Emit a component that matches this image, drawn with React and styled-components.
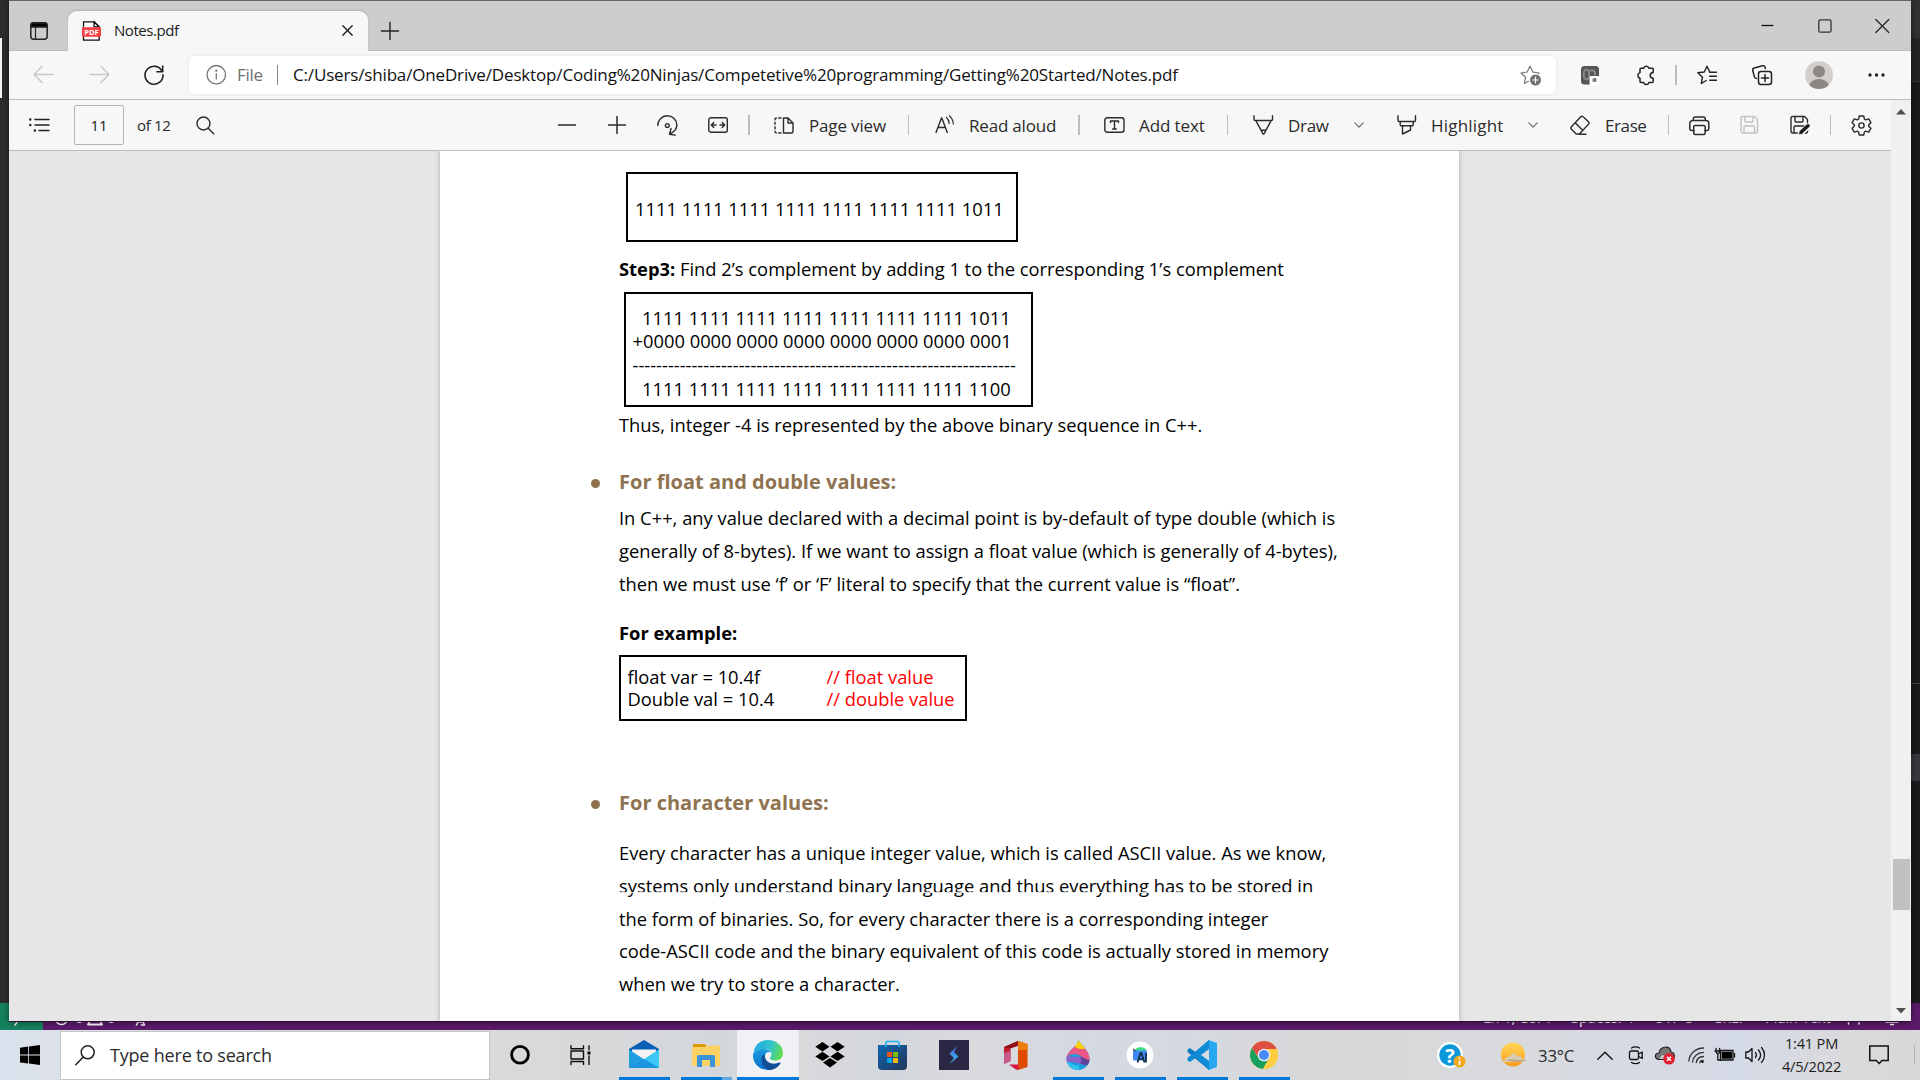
import React from "react";
import styled, { createGlobalStyle } from "styled-components";

const Global = createGlobalStyle`
  * { box-sizing: border-box; }
  html, body { margin: 0; padding: 0; overflow: hidden; }
  body { font-family: "Open Sans", "Noto Sans", sans-serif; color: #1b1b1b; }
  svg { display: block; flex: none; overflow: visible; }
`;

/* ---------- desktop ---------- */

const Desktop = styled.div`
  position: relative;
  width: 1920px;
  height: 1080px;
  display: flex;
  flex-direction: column;
  overflow: hidden;
  background: #1b1b1b;
`;
const EditorBody = styled.div`
  display: flex;
  justify-content: space-between;
  height: 1003px;
`;
const EditorEdge = styled.div`
  width: 9px;
  display: flex;
  flex-direction: column;
  background: ${(p) => p.$bg};
`;
const EdgePart = styled.div`
  height: ${(p) => p.$h}px;
  width: ${(p) => p.$w || 9}px;
  background: ${(p) => p.$bg || "transparent"};
`;
const StatusBar = styled.div`
  height: 27px;
  display: flex;
  background: #5c1a6b;
  color: #fff;
  font-size: 14.5px;
  line-height: 27px;
`;
const Remote = styled.div`
  width: 43px;
  background: #16825d;
  padding: 9px 0 0 14px;
`;
const StatusGroup = styled.div`
  display: flex;
  padding-left: ${(p) => p.$pl || 0}px;
`;
const StatusItem = styled.span`
  width: ${(p) => p.$w}px;
  white-space: nowrap;
  padding-top: 1px;
`;
const StatusFill = styled.div`
  flex: 1;
`;

const Window = styled.div`
  position: absolute;
  left: 9px;
  top: 0;
  width: 1902px;
  height: 1021px;
  display: flex;
  flex-direction: column;
  background: #f7f7f7;
  border-top: 1px solid #6a6464;
  box-shadow: 0 1px 7px rgba(0, 0, 0, 0.5), 0 1px 0 #3d1746;
`;

/* ---------- tab strip ---------- */

const TabStrip = styled.div`
  height: 50px;
  display: flex;
  align-items: flex-end;
  background: #cdcdcd;
  border-bottom: 1px solid #bdbdbd;
`;
const StripCell = styled.div`
  width: ${(p) => p.$w}px;
  height: 38px;
  padding: ${(p) => p.$p || "0"};
`;
const Tab = styled.div`
  width: 300px;
  height: 40px;
  margin-bottom: -1px;
  display: flex;
  align-items: center;
  padding: 0 0 1px 14px;
  border-radius: 9px 9px 0 0;
  background: #f7f7f7;
  box-shadow: 0 -1px 2px rgba(0, 0, 0, 0.14);
`;
const TabTitle = styled.span`
  width: 241px;
  padding: 0 0 2px 13px;
  font-size: 15px;
  letter-spacing: -0.45px;
`;
const WindowButtons = styled.div`
  margin-left: auto;
  display: flex;
  align-self: flex-start;
  padding-top: 18px;
`;
const WinButton = styled.div`
  width: ${(p) => p.$w || 57}px;
  display: flex;
`;

/* ---------- address row ---------- */

const AddressRow = styled.div`
  height: 49px;
  display: flex;
  align-items: center;
  padding-left: 24px;
  border-bottom: 1px solid #bcbcbc;
`;
const Cell = styled.div`
  width: ${(p) => p.$w}px;
  flex: none;
  display: flex;
  align-items: center;
`;
const UrlBox = styled.div`
  width: 1367px;
  height: 38px;
  display: flex;
  align-items: center;
  padding-left: 17px;
  background: #fff;
  border-radius: 5px;
  box-shadow: 0 0 4px rgba(0, 0, 0, 0.08);
  font-size: 17px;
`;
const Url = styled.span`
  width: 1227px;
  padding-bottom: 2px;
  color: #111;
  white-space: nowrap;
  letter-spacing: ${(p) => p.$ls}px;
`;
const Scheme = styled.span`
  width: 40px;
  padding-bottom: 2px;
  color: #707070;
  letter-spacing: -0.3px;
`;
const Rule = styled.div`
  width: ${(p) => p.$w || 1}px;
  height: 20px;
  background: ${(p) => p.$c || "#bdbdbd"};
`;
const Avatar = styled.div`
  width: 28px;
  height: 28px;
  border-radius: 50%;
  overflow: hidden;
  background: #d3d0cb;
`;

/* ---------- pdf viewer ---------- */

const Viewer = styled.div`
  flex: 1;
  display: flex;
  min-height: 0;
`;
const ViewerMain = styled.div`
  width: 1882px;
  display: flex;
  flex-direction: column;
`;
const PdfBar = styled.div`
  height: 51px;
  flex: none;
  display: flex;
  align-items: center;
  padding-left: 20px;
  border-bottom: 1px solid #bcbcbc;
`;
const PageInput = styled.div`
  width: 50px;
  height: 40px;
  display: flex;
  align-items: center;
  justify-content: center;
  border: 1px solid #b4b4b4;
  border-radius: 2px;
  font-size: 15px;
`;
const Label = styled.span`
  font-size: ${(p) => p.$size || 17}px;
  letter-spacing: ${(p) => p.$ls || 0}px;
  white-space: nowrap;
  color: #2b2b2b;
`;
const Scrollbar = styled.div`
  width: 20px;
  display: flex;
  flex-direction: column;
  align-items: center;
  justify-content: space-between;
  padding: 9px 0 7px;
  background: #f0f0f0;
`;
const Track = styled.div`
  flex: 1;
  width: 100%;
  padding: 744px 1px 0 2px;
`;
const Thumb = styled.div`
  height: 51px;
  background: #c1c1c1;
`;
const Canvas = styled.div`
  flex: 1;
  min-height: 0;
  overflow: hidden;
  display: flex;
  background: #e6e6e6;
  padding-left: 431px;
`;
const Page = styled.article`
  position: relative;
  width: 1019px;
  padding: 21px 0 0 179px;
  background: #fff;
  box-shadow: 0 0 5px rgba(0, 0, 0, 0.28);
  color: #000;
  font-size: 18.33px;
`;
const Seam = styled.div`
  position: absolute;
  left: 170px;
  right: 100px;
  top: 741px;
  height: 1px;
  background: rgba(255, 255, 255, 0.85);
`;
const Frame = styled.div`
  width: ${(p) => p.$w}px;
  height: ${(p) => p.$h}px;
  margin-left: ${(p) => p.$ml || 0}px;
  padding: ${(p) => p.$p};
  border: 2px solid #000;
  line-height: ${(p) => p.$lh}px;
  white-space: pre;
`;
const Para = styled.p`
  margin: ${(p) => p.$mt}px 0 0;
  line-height: ${(p) => p.$lh || 25}px;
  white-space: pre;
`;
const Gap = styled.div`
  height: ${(p) => p.$h}px;
`;
const Heading = styled.h3`
  display: flex;
  align-items: center;
  margin: ${(p) => p.$mt}px 0 0 -28.5px;
  font-size: 20.03px;
  font-weight: 700;
  line-height: 30px;
  color: #8f7350;
  &::before {
    content: "";
    width: 9px;
    height: 9px;
    margin: 3px 19.5px 0 0;
    border-radius: 50%;
    background: #8f7350;
  }
`;
const CodeRow = styled.div`
  display: flex;
`;
const Code = styled.span`
  width: 199px;
`;
const Comment = styled.span`
  color: #ff0000;
`;

/* ---------- taskbar ---------- */

const Taskbar = styled.div`
  height: 50px;
  flex: none;
  position: relative;
  display: flex;
  background: linear-gradient(90deg, #dbe2ed 0, #dce1e9 60px, #dadada 490px, #d7d8da 620px, #d3d7dc 720px, #d9dadb 780px, #d3d6dc 900px, #d9dadd 960px, #d4d9e2 1090px, #d6d9df 1200px, #d8d8d8 1340px, #d9dade 1500px, #d4dae6 1740px, #dadadd 1840px, #d8d8da 1920px);
`;
const Start = styled.div`
  width: 60px;
  padding: 15px 0 0 20px;
`;
const Search = styled.div`
  width: 430px;
  height: 49px;
  margin-top: 1px;
  display: flex;
  align-items: center;
  padding: 0 0 1px 14px;
  gap: 15px;
  background: #fff;
  border: 1px solid #c6c6c6;
  font-size: 18px;
  letter-spacing: -0.2px;
  color: #2b2b2b;
`;
const AppButton = styled.div`
  width: 62px;
  height: 50px;
  display: flex;
  flex-direction: column;
  align-items: center;
  justify-content: space-between;
  background: ${(p) => (p.$active ? "#eff1f4" : "transparent")};
`;
const AppIcon = styled.div`
  height: 47px;
  display: flex;
  align-items: center;
  padding-top: 3px;
`;
const Underline = styled.div`
  height: 3px;
  width: ${(p) => (p.$full ? 62 : 51)}px;
  background: ${(p) => (p.$split ? "linear-gradient(90deg, #0078d7 41px, #62a8e2 41px)" : "#0078d7")};
`;
const SystemCell = styled.div`
  width: 60px;
  display: flex;
  align-items: center;
  justify-content: center;
`;
const Tray = styled.div`
  display: flex;
  align-items: center;
  padding-left: 142px;
`;
const Clock = styled.div`
  width: 81px;
  display: flex;
  flex-direction: column;
  align-items: center;
  font-size: 14.6px;
  line-height: 23px;
  letter-spacing: -0.2px;
  color: #1d1d1d;
  white-space: nowrap;
`;

const Svg = ({ w = 20, h = 20, sw = 1.4, c = "#2b2b2b", fill = "none", children }) => (
  <svg width={w} height={h} viewBox={`0 0 ${w} ${h}`} fill={fill} stroke={c} strokeWidth={sw} strokeLinecap="round" strokeLinejoin="round">
    {children}
  </svg>
);

const Chevron = () => (
  <Svg w={10} h={6} sw={1.1} c="#666"><path d="M.8 .8 5 5.2 9.2 .8" /></Svg>
);
const Floppy = ({ c, pen }) => (
  <Svg w={20} h={20} c={c}>
    <path d="M2.500 1.500h12l3 3v12a1.500 1.500 0 0 1-1.500 1.500H2.500A1.500 1.500 0 0 1 1 16.500V3a1.500 1.500 0 0 1 1.500-1.500zM5 1.500v4.500a1 1 0 0 0 1 1h6a1 1 0 0 0 1-1V1.500M4 18v-6a1 1 0 0 1 1-1h8.500a1 1 0 0 1 1 1v6" />
    {pen && <><path d="M10.500 18.500 19 10.500" stroke="#f7f7f7" strokeWidth="5.500" /><path d="M11.500 16.800 18 10.800" stroke="#1d1d1d" strokeWidth="3.600" /><path d="m8.700 19.600 1.400-4 2.900 2.900z" fill="#1d1d1d" stroke="none" /></>}
  </Svg>
);

const barcode = "1111 1111 1111 1111 1111 1111 1111 ";

function Tabs() {
  return (
    <TabStrip>
      <StripCell $w={59} $p="10px 0 0 21px">
        <Svg w={18} h={18} sw={1.5} c="#222">
          <rect x=".8" y=".8" width="16.400" height="16.400" rx="3" />
          <path d="M1 3a2 2 0 0 1 2-2h12a2 2 0 0 1 2 2v2H1z" fill="#000" />
          <path d="M5.500 5v12" strokeWidth="1.200" />
        </Svg>
      </StripCell>
      <Tab>
        <Svg w={19} h={20} sw={1.3} c="#111">
          <path d="M1.500 6V.8h10.500l5.200 5V19.200H1.500V6" fill="#fff" />
          <path d="M12 .8v5h5z" fill="#fff" />
          <rect x="0" y="6.200" width="19" height="9.600" rx="1" fill="#f43f43" stroke="none" />
          <text x="9.500" y="13.700" textAnchor="middle" fontSize="7.600" fontWeight="700" fill="#fff" stroke="none">PDF</text>
        </Svg>
        <TabTitle>Notes.pdf</TabTitle>
        <Svg w={11} h={11} sw={1.4} c="#222"><path d="m.8 .8 9.400 9.400M10.200 .8.8 10.200" /></Svg>
      </Tab>
      <StripCell $w={40} $p="9.500px 0 0 13px">
        <Svg w={18} h={18} c="#222"><path d="M9 .5v17M.5 9h17" /></Svg>
      </StripCell>
      <WindowButtons>
        <WinButton><Svg w={13} h={13} sw={1.3} c="#111"><path d="M.5 6.500h12" strokeLinecap="butt" /></Svg></WinButton>
        <WinButton><Svg w={14} h={14} sw={1.3} c="#333"><rect x=".8" y=".8" width="12.200" height="12.400" rx="1.500" /></Svg></WinButton>
        <WinButton $w={36}><Svg w={14} h={14} sw={1.2} c="#222"><path d="m.8 .5 13 13M13.800.5l-13 13" /></Svg></WinButton>
      </WindowButtons>
    </TabStrip>
  );
}

function Address() {
  return (
    <AddressRow>
      <Cell $w={56}><Svg w={21} h={18} sw={1.3} c="#c6c6c6"><path d="M20 8.500H1M9 .5l-8 8 8 8" /></Svg></Cell>
      <Cell $w={55}><Svg w={21} h={18} sw={1.3} c="#c6c6c6"><path d="M1 8.500h19M12 .5l8 8-8 8" /></Svg></Cell>
      <Cell $w={45}><Svg w={20} h={20} sw={1.6} c="#222"><path d="M18.300 6.700A9 9 0 1 0 19 9.700M18.700 1V6.700h-5.800" /></Svg></Cell>
      <UrlBox>
        <Cell $w={31}>
          <Svg w={20} h={20} sw={1.3} c="#777"><circle cx="10.300" cy="9.700" r="9.200" /><path d="M10.300 8.700v5.300" /><circle cx="10.300" cy="5.700" r=".5" fill="#777" /></Svg>
        </Cell>
        <Scheme>File</Scheme>
        <Cell $w={16}><Rule $c="#888" /></Cell>
        <Url $ls={-0.16}>C:/Users/shiba/OneDrive/Desktop/Coding%20Ninjas/Competetive%20programming/Getting%20Started/Notes.pdf</Url>
        <Svg w={22} h={21} sw={1.2} c="#767676">
          <path d="M18.500 8.800l.5-.8-6-.8L10 1.200 7.200 7l-6.200 1 4.600 4.300-1.200 6.200 4-2.200" />
          <circle cx="15.500" cy="15" r="5.500" fill="#707070" stroke="none" />
          <path d="M15.500 12.200v5.600M12.700 15h5.600" stroke="#fff" />
        </Svg>
      </UrlBox>
      <Cell $w={80}>
        <Cell $w={25} />
        <Svg w={19} h={19}>
          <rect x="0" y="0" width="18" height="18.500" rx="3.500" fill="#555" stroke="none" />
          <ellipse cx="5.500" cy="8.500" rx="2.800" ry="5" stroke="#8c8c8c" strokeWidth="2" />
          <path d="M9.500 4.500c3-1 5 1 4.500 4" stroke="#8c8c8c" strokeWidth="2" />
          <rect x="8.500" y="10" width="10" height="9" rx="1.500" fill="#fff" stroke="none" />
          <rect x="11.500" y="12" width="4" height="4" rx="1.500" fill="#777" stroke="none" />
        </Svg>
      </Cell>
      <Cell $w={39}>
        <Svg w={19} h={20} sw={1.5} c="#222">
          <path d="M5 3.200h2.700a2.700 2.700 0 0 1 5.200 0h3.300a1 1 0 0 1 1 1v3.400c-4 .3-4 5.300 0 5.600v3.400a1 1 0 0 1-1 1h-3.300a2.700 2.700 0 0 1-5.200 0H5a1 1 0 0 1-1-1v-3.400a2.900 2.900 0 0 1 0-5.600V4.200a1 1 0 0 1 1-1z" />
        </Svg>
      </Cell>
      <Cell $w={22}><Rule $w={1.5} /></Cell>
      <Cell $w={55}>
        <Svg w={20} h={20} c="#222"><path d="M12.700 7 10 1.200 7.300 7l-6.500.8 4.700 4.400-1.200 6.300 4.900-3M12.700 7.200h6.800M12.700 11.300h6.800M12.700 15.300h6.800" /></Svg>
      </Cell>
      <Cell $w={53}>
        <Svg w={20} h={20} sw={1.5} c="#222">
          <rect x="6.500" y="6.500" width="13" height="13" rx="2.500" />
          <path d="M13 9.500v7M9.500 13h7M4.500 13.500c-1 0-1.800-.5-2.100-1.600L.8 5.500c-.3-1.200.3-2.200 1.400-2.500L10.500.8c1.200-.3 2.200.2 2.500 1.500l.4 1.300" />
        </Svg>
      </Cell>
      <Cell $w={63}>
        <Avatar>
          <Svg w={28} h={28} c="none" fill="#8b8783"><circle cx="14" cy="10.500" r="6" /><ellipse cx="14" cy="26" rx="10" ry="8" /></Svg>
        </Avatar>
      </Cell>
      <Svg w={17} h={4} c="none" fill="#222"><circle cx="2" cy="2" r="1.700" /><circle cx="8.500" cy="2" r="1.700" /><circle cx="15" cy="2" r="1.700" /></Svg>
    </AddressRow>
  );
}

function PdfToolbar() {
  return (
    <PdfBar>
      <Cell $w={45}>
        <Svg w={21} h={14} c="#222" sw={1.5}>
          <path d="M6 1.500h14M6 7h14M10 12.500h10" /><path d="M1.200 1.500h.1M1.200 7h.1M5.800 12.500h.1" strokeWidth="2.400" />
        </Svg>
      </Cell>
      <Cell $w={63}><PageInput>11</PageInput></Cell>
      <Cell $w={59}><Label $size={15} $ls={-0.3}>of 12</Label></Cell>
      <Cell $w={362}><Svg w={19} h={19}><circle cx="7.500" cy="7.500" r="6.500" /><path d="m12.200 12.200 5.500 5.500" /></Svg></Cell>
      <Cell $w={50}><Svg w={18} h={18} sw={1.5}><path d="M.5 9h17" /></Svg></Cell>
      <Cell $w={49}><Svg w={18} h={18} sw={1.5}><path d="M.5 9h17M9 .5v17" /></Svg></Cell>
      <Cell $w={51}>
        <Svg w={21} h={21}><path d="M.8 10.500a9.500 9.500 0 0 1 19-.5c0 3.800-2 6.500-6 8.500M14 13.500l-1.500 5.800 5.800.8" /><circle cx="10.300" cy="10.500" r="1.900" /></Svg>
      </Cell>
      <Cell $w={40}>
        <Svg w={20} h={16}><rect x=".8" y=".8" width="18.500" height="14.400" rx="2" /><path d="M8 8H3.500M5.800 5.500 3.300 8l2.500 2.500M12 8h4.500M14.200 5.500 16.700 8l-2.500 2.500" /></Svg>
      </Cell>
      <Cell $w={26}><Rule $w={1.5} /></Cell>
      <Cell $w={35}>
        <Svg w={20} h={17}>
          <path d="M9.500 1v15M9.500 1H14l5 5v8.500a1.500 1.500 0 0 1-1.500 1.500h-8M14 1v5h5" /><path d="M7 1H2.500A1.500 1.500 0 0 0 1 2.500v12A1.500 1.500 0 0 0 2.500 16H7" strokeDasharray="2.200 2.400" />
        </Svg>
      </Cell>
      <Cell $w={99}><Label $ls={-0.15}>Page view</Label></Cell>
      <Cell $w={27}><Rule /></Cell>
      <Cell $w={34}>
        <Svg w={20} h={20}><path d="M1 17.500 6.500 3h.3l5.500 14.500M3 12.500h7.500" /><path d="M11.500 2.500c1.700 1.500 2.500 3.500 2.700 6M14.300.8c2.500 2 3.800 4.700 4 8.200" strokeWidth="1.200" /></Svg>
      </Cell>
      <Cell $w={109}><Label $ls={-0.2}>Read aloud</Label></Cell>
      <Cell $w={26}><Rule $w={1.5} /></Cell>
      <Cell $w={35}>
        <Svg w={21} h={16}><rect x=".8" y=".8" width="19.200" height="14.400" rx="2.500" /><path d="M6.500 5.500V4h8v1.500M10.500 4v8M8.700 12h3.600" /></Svg>
      </Cell>
      <Cell $w={88}><Label $ls={-0.1}>Add text</Label></Cell>
      <Cell $w={26}><Rule /></Cell>
      <Cell $w={35}>
        <Svg w={21} h={20}><path d="M1 .8v3.700a1 1 0 0 0 1 1h16.500a1 1 0 0 0 1-1V.8M3 5.800l7 13 .5.200.5-.200 7-13M8.500 15.300h3.500" /></Svg>
      </Cell>
      <Cell $w={65.5}><Label $ls={-0.3}>Draw</Label></Cell>
      <Cell $w={43.5}><Chevron /></Cell>
      <Cell $w={34}>
        <Svg w={20} h={20}><path d="M1 .8v4.700a1 1 0 0 0 1 1h15.500a1 1 0 0 0 1-1V.8M3.200 6.500v3.300a1 1 0 0 0 1 1h11a1 1 0 0 0 1-1V6.500M5.500 10.800V19l8-4v-4.200" /></Svg>
      </Cell>
      <Cell $w={97}><Label $ls={0.2}>Highlight</Label></Cell>
      <Cell $w={42}><Chevron /></Cell>
      <Cell $w={35}>
        <Svg w={20} h={20}><path d="M11 1.500a1.300 1.300 0 0 1 1.900 0l5.800 5.400a1.400 1.400 0 0 1 0 2L9.500 19H6.200L1.200 14a1.400 1.400 0 0 1 0-2zM5.200 7.800l7.500 7.500M9 19.200h7" /></Svg>
      </Cell>
      <Cell $w={63}><Label $ls={-0.4}>Erase</Label></Cell>
      <Cell $w={21}><Rule /></Cell>
      <Cell $w={51}>
        <Svg w={21} h={19} sw={1.5}>
          <path d="M5 14.500H2.500A1.700 1.700 0 0 1 .8 12.800V7.500A3 3 0 0 1 3.800 4.500h13a3 3 0 0 1 3 3v5.300a1.700 1.700 0 0 1-1.700 1.700H16M4.300 4.300V3A2 2 0 0 1 6.300 1h8a2 2 0 0 1 2 2v1.300" /><rect x="4.700" y="9.500" width="11.500" height="9" rx="1.500" />
        </Svg>
      </Cell>
      <Cell $w={50}><Floppy c="#c2c2c2" /></Cell>
      <Cell $w={40}><Floppy c="#2b2b2b" pen /></Cell>
      <Cell $w={21}><Rule /></Cell>
      <Svg w={21} h={21}>
        <path d="M8.300 1h4.400l.7 3 1.300.8 3-.9 2.200 3.800-2.200 2.100v1.400l2.200 2.100-2.200 3.800-3-.9-1.300.8-.7 3H8.300l-.7-3-1.300-.8-3 .9-2.200-3.800 2.200-2.100V9.800L1.100 7.700l2.200-3.800 3 .9L7.600 4z" /><circle cx="10.500" cy="10.500" r="2.600" />
      </Svg>
    </PdfBar>
  );
}

function Document() {
  return (
    <Canvas>
      <Page>
        <Frame $ml={7} $w={392} $h={70} $lh={25} $p="22px 0 0 7px">{barcode}1011</Frame>
        <Para $mt={14.4}><b>Step3:</b> Find 2’s complement by adding 1 to the corresponding 1’s complement</Para>
        <Gap $h={10.6} />
        <Frame $ml={5} $w={409} $h={115} $lh={23.8} $p="11.700px 0 0 6.500px">
          {"  " + barcode + "1011\n+0000 0000 0000 0000 0000 0000 0000 0001\n" + "-".repeat(65) + "\n  " + barcode + "1100"}
        </Frame>
        <Para $mt={5.4}>Thus, integer -4 is represented by the above binary sequence in C++.</Para>
        <Heading $mt={29.6}>For float and double values:</Heading>
        <Para $mt={4.4} $lh={33}>
          {"In C++, any value declared with a decimal point is by-default of type double (which is\ngenerally of 8-bytes). If we want to assign a float value (which is generally of 4-bytes),\nthen we must use ‘f’ or ‘F’ literal to specify that the current value is “float”."}
        </Para>
        <Para $mt={20}><b>For example:</b></Para>
        <Gap $h={9.6} />
        <Frame $w={348} $h={66} $lh={22} $p="8.900px 0 0 6.500px">
          <CodeRow><Code>float var = 10.4f</Code><Comment>// float value</Comment></CodeRow>
          <CodeRow><Code>Double val = 10.4</Code><Comment>// double value</Comment></CodeRow>
        </Frame>
        <Heading $mt={67}>For character values:</Heading>
        <Para $mt={19.3} $lh={32.7}>
          {"Every character has a unique integer value, which is called ASCII value. As we know,\nsystems only understand binary language and thus everything has to be stored in\nthe form of binaries. So, for every character there is a corresponding integer\ncode-ASCII code and the binary equivalent of this code is actually stored in memory\nwhen we try to store a character."}
        </Para>
        <Seam />
      </Page>
    </Canvas>
  );
}

const apps = [
  { name: "mail", open: true, icon: (
    <svg width="30" height="30" viewBox="0 0 30 30"><path d="M0 9 15 0l15 9v6H0z" fill="#0a5fb4" /><path d="M3 9.500h24v8L15 24 3 17.500z" fill="#f3f3f3" /><path d="M0 9.500 16 20 30 9.500V28H0z" fill="#1f9fe0" /><path d="M30 9.500V28L15 19z" fill="#3cc8f4" /><path d="M0 28 15 19l15 9z" fill="#1b95e0" /></svg>) },
  { name: "files", open: true, split: true, icon: (
    <svg width="28" height="25" viewBox="0 0 28 25"><path d="M1 1h12l2 3H1z" fill="#dd9a05" /><path d="M0 4h13l2-1.500h13V23H0z" fill="#fdd166" /><path d="M5 24V14a2 2 0 0 1 2-2h14a2 2 0 0 1 2 2v10h-5v-7h-8v7z" fill="#3b93d9" /></svg>) },
  { name: "edge", open: true, active: true, icon: (
    <svg width="30" height="30" viewBox="0 0 30 30">
      <defs>
        <linearGradient id="eg" x1="0" y1=".3" x2="1" y2=".5"><stop offset="0" stopColor="#1fa8e2" /><stop offset=".55" stopColor="#2fc4cb" /><stop offset="1" stopColor="#66dd4a" /></linearGradient>
        <linearGradient id="eb" x1="0" y1="0" x2="0" y2="1"><stop offset="0" stopColor="#1a9ddf" /><stop offset="1" stopColor="#0a6fce" /></linearGradient>
      </defs>
      <path d="M.5 13C1.500 5 7.500 0 15 0c8.500 0 15 6 15 13 0 5-3.500 7.500-7.500 7.500-3.500 0-5.500-1.200-5.500-2.500 0-1 1.500-1.500 1.500-4 0-3-3-5-7-5C6 9 2 11 .5 13z" fill="url(#eg)" />
      <path d="M11 9c3.500 0 6 1.500 7 3.500-3-1.500-5.500 0-6 3-.5 6 5 9.500 10 9.500 2 0 4-.5 5-1.500C24.500 27.500 20 30 15 30 6.500 30 0 23.500 0 15.500 0 11.500 5 9 11 9z" fill="url(#eb)" />
      <path d="M11.500 14c-2.500 1.500-3.500 4-3 7 .7 5 4 8.500 8.500 9 4.500-.5 8-3 10.500-6.500.3-.8-.4-1.300-1.200-.9C21 25 14 23.500 12 18c-.5-1.500-.5-2.800-.5-4z" fill="#124f97" />
    </svg>) },
  { name: "dropbox", icon: (
    <svg width="30" height="26" viewBox="0 0 30 26" fill="#000"><path d="m7.500 0 7 4.700-7 4.700L.3 4.700zM22.500 0l7.200 4.700-7.200 4.700-7-4.700zM7.500 9.700l7 4.700-7 4.700-7.200-4.700zM22.500 9.700l7.200 4.700-7.200 4.700-7-4.700zM15 16l7 4.600-7 4.900-7-4.900z" /></svg>) },
  { name: "store", icon: (
    <svg width="29" height="29" viewBox="0 0 29 29"><defs><linearGradient id="st" x1="0" y1="0" x2="1" y2="1"><stop offset="0" stopColor="#0d67b0" /><stop offset="1" stopColor="#24355a" /></linearGradient></defs><path d="M8 6V1.500a1 1 0 0 1 1-1h11a1 1 0 0 1 1 1V6" fill="none" stroke="#22b0ee" strokeWidth="1.600" /><path d="M0 4h29v21a4 4 0 0 1-4 4H4a4 4 0 0 1-4-4z" fill="url(#st)" /><path d="M8 3.500V6M21 3.500V6" stroke="#22b0ee" strokeWidth="1.600" /><path d="M9 11h5v5H9z" fill="#f1511b" /><path d="M15 11h5v5h-5z" fill="#80bb03" /><path d="M9 17h5v5H9z" fill="#00a3ee" /><path d="M15 17h5v5h-5z" fill="#fbb80a" /></svg>) },
  { name: "spark", icon: (
    <svg width="30" height="30" viewBox="0 0 30 30"><defs><linearGradient id="sg" x1="0" y1="0" x2="0" y2="1"><stop offset="0" stopColor="#4a63e8" /><stop offset="1" stopColor="#35cdf4" /></linearGradient></defs><path d="M0 0h30v30H0z" fill="#292743" /><path d="M18.500 6 10.500 13.500l4.500 4.500-4.500 6 9-7.500-4.500-4.500z" fill="url(#sg)" /></svg>) },
  { name: "office", icon: (
    <svg width="24" height="29" viewBox="0 0 24 29"><path d="M0 6 14 0l1 4.500-8.500 3V20L0 23z" fill="#c51d2b" /><path d="M0 12v11l6.500-3V10z" fill="#c75a8b" /><path d="M0 6 14 0v4.700L5 7.500z" fill="#8f1117" /><path d="m14 0 9.500 3v23L14 29z" fill="#e04a05" /><path d="m14 0 9.500 3v6H14z" fill="#ef7d0b" /><path d="M5 23.500h9.500V29L12 28.500z" fill="#d6143d" /></svg>) },
  { name: "paint", open: true, icon: (
    <svg width="24" height="30" viewBox="0 0 24 30"><defs><clipPath id="dr"><path d="M12.500 0C15 5 23.500 11 23.500 18.500 23.500 25.500 18 30 12 30S.5 25.500.5 18.500C.5 11 11 7 12.500 0z" /></clipPath></defs><g clipPath="url(#dr)"><path d="M0 0h24v30H0z" fill="#1d9ce0" /><path d="M0 14c7 6 12 0 24 5v5c-8 4-13-5-24-1z" fill="#8d62c9" /><path d="M14 17c4 0 7 1 10 2v5c-4 2-7 1-10-1 2-2 2-4 0-6z" fill="#60439c" /><path d="M0 5h24v15c-7 0-8-6-16-6-3 0-5 1-8 3z" fill="#ea5884" /><path d="M8 0h8l4 8c-2 2-9 1-11-1z" fill="#fbd20c" /><path d="M0 22c5-1 7 5 13 3v5H0z" fill="#2cc3f0" /></g></svg>) },
  { name: "studio", open: true, icon: (
    <svg width="28" height="28" viewBox="0 0 28 28"><circle cx="14" cy="14" r="13.500" fill="#fff" /><path d="M9 10c0-5 11-5 11.500 0z" fill="#3ddc84" /><rect x="7" y="9.500" width="14" height="10" rx="1.500" fill="#4285f4" /><path d="M7 7l3 3H7.500z" fill="#12333f" /><path d="m11.500 21.500 3-9.500h1l3 9.500M12.500 18h5M20 12v9.500" fill="none" stroke="#0c3041" strokeWidth="1.700" /></svg>) },
  { name: "code", open: true, icon: (
    <svg width="30" height="30" viewBox="0 0 30 30"><path d="M22 0 9 12.500 3 8 .5 9.500v2.500L22 30z" fill="#0a7cc4" /><path d="M22 30 9 17.500 3 22 .5 20.500V18L22 0z" fill="#0e8ad6" /><path d="m22 9-8 6 8 6z" fill="#d5dae2" /><path d="m22 0 8 3v24l-8 3z" fill="#29a8f1" /></svg>) },
  { name: "chrome", open: true, icon: (
    <svg width="28" height="28" viewBox="0 0 28 28"><circle cx="14" cy="14" r="14" fill="#ffcd41" /><path d="M14 8h12.700A14 14 0 0 0 1.900 7l6.900 10z" fill="#dd4f43" /><path d="M1.900 7A14 14 0 0 0 13 28l6-11-9 2z" fill="#19a15f" /><path d="M13 28A14 14 0 0 0 26.700 8H16l3.500 9z" fill="#ffcd41" /><circle cx="14" cy="14" r="6.300" fill="#f1f1f1" /><circle cx="14" cy="14" r="5" fill="#4a8af4" /></svg>) },
];

function Tasks() {
  return (
    <Taskbar>
      <Start>
        <svg width="20" height="20" viewBox="0 0 20 20" fill="#000"><path d="M0 2.700 8.200 1.500v8.100H0zM9 1.400 20 0v9.600H9zM0 10.400h8.200v8.100L0 17.400zM9 10.400h11V20L9 18.600z" /></svg>
      </Start>
      <Search>
        <Svg w={20} h={21} sw={1.5} c="#222"><circle cx="12.700" cy="7.300" r="6.500" /><path d="M8 12.200.8 19.800" /></Svg>
        <span>Type here to search</span>
      </Search>
      <SystemCell><Svg w={20} h={20} sw={2.8} c="#000"><circle cx="10" cy="9.700" r="8.400" /></Svg></SystemCell>
      <SystemCell>
        <Svg w={21} h={20} sw={1.4} c="#111"><path d="M1 .8v3h12.500v-3M1 19.500v-3h12.500v3M19 .8v4M19 11v8.500" /><rect x="1" y="6" width="12.500" height="8" /><path d="M17.500 6.500h3v3h-3z" fill="#000" stroke="none" /></Svg>
      </SystemCell>
      <Cell $w={3} />
      {apps.map((a) => (
        <AppButton key={a.name} $active={a.active}>
          <AppIcon>{a.icon}</AppIcon>
          {a.open && <Underline $full={a.active} $split={a.split} />}
        </AppButton>
      ))}
      <Tray>
        <Cell $w={62}>
          <svg width="29" height="27" viewBox="0 0 29 27"><circle cx="13" cy="13" r="13" fill="#fff" /><circle cx="13" cy="13" r="10.700" fill="#0a97d9" /><text x="13" y="20.500" fontSize="20" fontWeight="700" fill="#fff" textAnchor="middle">?</text><circle cx="22.500" cy="19.500" r="6" fill="#f2a81d" /><path d="M22.500 18.500v4.500M22.500 15.500v1.500" stroke="#fff" strokeWidth="1.700" /></svg>
        </Cell>
        <Cell $w={39}>
          <svg width="28" height="24" viewBox="0 0 28 24"><defs><linearGradient id="sun" x1="0" y1="0" x2="0" y2="1"><stop offset="0" stopColor="#ffd75a" /><stop offset="1" stopColor="#fb9c1c" /></linearGradient></defs><circle cx="14" cy="11.500" r="12" fill="url(#sun)" /><path d="M6 17.500c0-3 2.500-4.500 4.800-4 1.500-4 6.500-4 7.700 0 3.500-.8 5 1.500 5 3 1.500 0 3.500.4 5.500 1.200-5 .8-9 .5-12 .8-4 .6-12 .8-18-.3 2-.5 4.500-.7 7-.7z" fill="#d9cbb4" /><path d="M7 17.500c4-2 8-1 12-.5 3 .3 5-.2 9 .5-7 1.500-14 1.500-21 0z" fill="#b9a78c" /></svg>
        </Cell>
        <Cell $w={59}><Label $size={16.8} $ls={-0.2}>33°C</Label></Cell>
        <Cell $w={31}><Svg w={16} h={9} c="#111"><path d="m.8 8.200 7.200-7 7.200 7" /></Svg></Cell>
        <Cell $w={27}><Svg w={15} h={18} sw={1.3} c="#111"><rect x="1.500" y="5" width="9" height="8.500" rx="1.500" /><path d="m10.500 8 3.700-2v6.500L10.500 10.500M3.500 2c2-1.500 6-1.500 8 0M3.500 16.500c2 1.500 6 1.500 8 0" /></Svg></Cell>
        <Cell $w={33}>
          <svg width="20" height="19" viewBox="0 0 20 19"><path d="M4 13.500C-1 13-.5 7 4 7c1-7 11-8 12-1 4 .5 4.500 6 1 7.500z" fill="#777" stroke="#222" strokeWidth="1.200" /><path d="M5 13c0-4 4-5 6-2l2 2z" fill="#c9c9c9" /><circle cx="14" cy="12.800" r="5.800" fill="#e0202e" /><path d="m12 10.800 4 4m0-4-4 4" stroke="#fff" strokeWidth="1.500" /></svg>
        </Cell>
        <Cell $w={27}><Svg w={17} h={17} sw={1.3} c="#333"><path d="M.8 14C1.500 6.500 8 1.200 15.500 1M4.500 15c.5-5.500 5-9.500 11-9.700M8.300 15.500c.5-3.500 3.500-5.800 7.200-6M12 15.800c0-1.500 1.500-2.500 3-2.500" /><circle cx="14.500" cy="14.700" r="1.200" fill="#000" stroke="none" /></Svg></Cell>
        <Cell $w={30}><Svg w={20} h={14} sw={1.3} c="#111"><rect x="5.500" y="2.500" width="12.500" height="9.500" /><path d="M7.300 4.500h9v5.500h-9z" fill="#000" stroke="#000" /><path d="M19.500 5.500v3.500M1 .3v3.500a1.800 1.800 0 0 0 3.600 0V.3M0 3h5.500M2.800 5.500v6.500h3" /></Svg></Cell>
        <Cell $w={26}><Svg w={21} h={18} sw={1.3} c="#111"><path d="M.8 6v6H3.500L7 15.500v-13L3.500 6zM10.500 6.500c1 1.500 1 3.500 0 5M13.500 4c2.500 3 2.500 7 0 10M16.500 1.500c4 4.500 4 10.500 0 15" /></Svg></Cell>
        <Cell $w={98}><Clock><span>1:41 PM</span><span>4/5/2022</span></Clock></Cell>
        <Cell $w={45}><Svg w={20} h={20} sw={1.5} c="#111"><path d="M.8 1h18.400v14.500H13L10.200 18.500 7.300 15.500H.8z" strokeLinejoin="miter" /></Svg></Cell>
        <Rule $c="#b5b5b5" />
      </Tray>
    </Taskbar>
  );
}

export default function App() {
  return (
    <Desktop>
      <Global />
      <EditorBody>
        <EditorEdge $bg="#2d2d2d">
          <EdgePart $h={38} />
          <EdgePart $h={60} $w={2} $bg="#f5f5f5" />
        </EditorEdge>
        <EditorEdge $bg="#1b1b1b">
          <EdgePart $h={38} $bg="#323233" />
          <EdgePart $h={43} $bg="#252526" />
          <EdgePart $h={1} $bg="#333" />
          <EdgePart $h={601} />
          <EdgePart $h={1} $bg="#444" />
          <EdgePart $h={70} />
          <EdgePart $h={27} $bg="#37373d" />
        </EditorEdge>
      </EditorBody>
      <StatusBar>
        <Remote><Svg w={10} h={13} c="#fff"><path d="m1 1 4 4-4 4M8 5 4 9l-3 4" /></Svg></Remote>
        <StatusGroup $pl={12}>
          <StatusItem $w={20}><Svg w={14} h={21} sw={1.6} c="#fff"><circle cx="6.500" cy="14.500" r="6" /></Svg></StatusItem>
          <StatusItem $w={12}>0</StatusItem>
          <StatusItem $w={20}><Svg w={17} h={21} sw={1.8} c="#fff"><path d="M1 20.500h14L8 7z" /></Svg></StatusItem>
          <StatusItem $w={29}>0</StatusItem>
          <StatusItem $w={20}><Svg w={10} h={22} sw={1.6} c="#fff"><path d="M.5 21l1.500-3h5L8.500 21H5.500M2.500 18V12h4v6" /></Svg></StatusItem>
        </StatusGroup>
        <StatusFill />
        <StatusGroup>
          <StatusItem $w={88}>Ln 1, Col 1</StatusItem>
          <StatusItem $w={83}>Spaces: 4</StatusItem>
          <StatusItem $w={59}>UTF-8</StatusItem>
          <StatusItem $w={52}>CRLF</StatusItem>
          <StatusItem $w={82}>Plain Text</StatusItem>
          <StatusItem $w={38}><Svg w={14} h={21} c="#fff"><path d="M1.500 20v-4M12 20v-4" /></Svg></StatusItem>
          <StatusItem $w={35}><Svg w={14} h={21} c="#fff"><path d="M1 18h12M5.500 20.500h3" /></Svg></StatusItem>
        </StatusGroup>
      </StatusBar>
      <Tasks />
      <Window>
        <Tabs />
        <Address />
        <Viewer>
          <ViewerMain>
            <PdfToolbar />
            <Document />
          </ViewerMain>
          <Scrollbar>
            <Svg w={10} h={6} c="none" fill="#505050"><path d="M0 5.500 5 0l5 5.500z" /></Svg>
            <Track><Thumb /></Track>
            <Svg w={10} h={6} c="none" fill="#505050"><path d="M0 0 5 5.500 10 0z" /></Svg>
          </Scrollbar>
        </Viewer>
      </Window>
    </Desktop>
  );
}
